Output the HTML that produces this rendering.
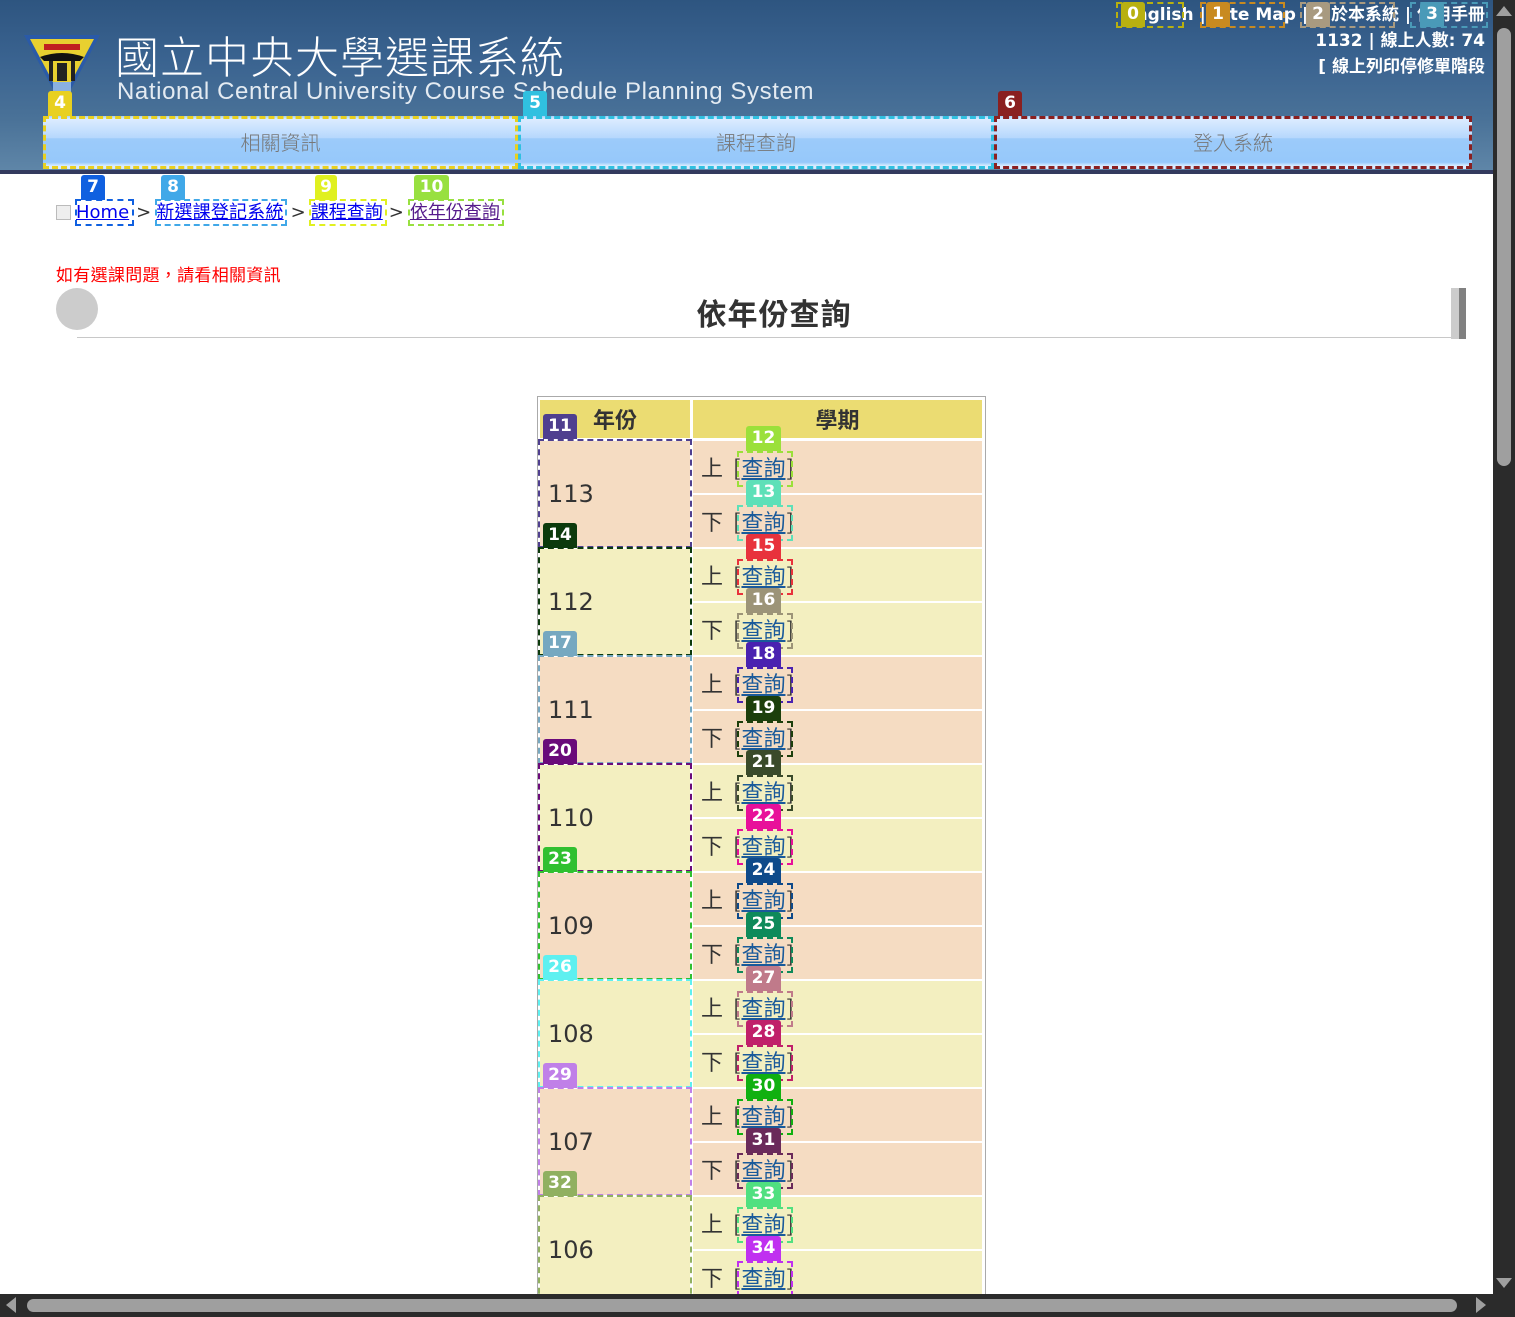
<!DOCTYPE html>
<html><head><meta charset="utf-8">
<style>
*{margin:0;padding:0;box-sizing:border-box}
body{width:1515px;height:1317px;overflow:hidden;position:relative;background:#fff;font-family:"DejaVu Sans","Liberation Sans","Noto Sans CJK TC",sans-serif;}
.a{position:absolute}
.hdr{left:0;top:0;width:1493px;height:171px;background:linear-gradient(180deg,#2e5580 0%,#3a6390 35%,#4a7298 70%,#5f86a8 100%)}
.band{left:0;top:170px;width:1493px;height:4px;background:#333a5e}
.btn{top:116px;height:53px;background:linear-gradient(180deg,#dcecff 0%,#b6d8fd 40%,#9ccbfa 42%,#96c8fa 92%,#dbeeff 100%);color:#777;font-size:20px;text-align:center;line-height:46px;font-family:"Noto Sans CJK TC",sans-serif;font-weight:300}
.lb{position:absolute;color:#fff;font-size:17px;font-weight:bold;text-align:center;border-radius:3px 3px 0 0;line-height:25px;height:25px}
.tw{color:#fff;font-size:17px;font-weight:bold;text-align:right;right:30px}
.bc a{color:#00e;text-decoration:underline}
.cell{position:absolute}
.yr{left:540px;width:150px;height:106px;font-size:24px;color:#333;padding-left:8px;display:flex;align-items:center}
.sm{left:693px;width:289px;height:52px;font-size:22px;color:#333;padding-left:8px;line-height:52px;font-family:"Noto Sans CJK TC",sans-serif}
.sm b{font-weight:normal;margin-left:10px}
.sm u{color:#1a5a9a;margin:0 1px}
.pe{background:#f5dcc2}.cr{background:#f3efc0}
.yb{position:absolute;left:538px;width:154px;height:109px;border:2px dashed}
.lk{position:absolute;left:737px;width:56px;height:36px;border:2px dashed}
.ll{left:746px;width:35px}
.yl{left:543px;width:34px}
</style></head><body>
<div class="a hdr"></div>
<div class="a band"></div>
<!-- logo -->
<svg class="a" style="left:22px;top:33px" width="80" height="75" viewBox="0 0 80 75"><polygon points="2,2 78,2 40,73" fill="#2a5aa8"/><polygon points="8,6 72,6 40,66" fill="#e8d030"/><rect x="22" y="11" width="36" height="6" fill="#c02020"/><path d="M18 24 Q40 16 62 24 L58 28 L22 28Z" fill="#111"/><rect x="27" y="28" width="4" height="20" fill="#222"/><rect x="49" y="28" width="4" height="20" fill="#222"/><rect x="35" y="30" width="10" height="18" fill="#222"/><rect x="31" y="49" width="18" height="10" fill="#8ab0e0"/></svg>
<div class="a" style="left:115px;top:26px;font-size:44px;color:#fff;font-family:'Noto Sans CJK TC',sans-serif;font-weight:300;letter-spacing:1px;line-height:56px">國立中央大學選課系統</div>
<div class="a" style="left:117px;top:77px;font-size:24px;color:#e4ebf2;font-family:'Liberation Sans',sans-serif;line-height:30px;letter-spacing:0.6px">National Central University Course Schedule Planning System</div>
<!-- top right -->
<div class="a tw" style="top:3px;line-height:24px">English | Site Map | 關於本系統 | 使用手冊</div>
<div class="a" style="left:1116px;top:2px;width:68px;height:26px;border:2px dashed #b8b010"></div>
<div class="lb" style="left:1121px;top:2px;width:24px;background:#b8b010">0</div>
<div class="a" style="left:1200px;top:2px;width:85px;height:26px;border:2px dashed #c88a20"></div>
<div class="lb" style="left:1206px;top:2px;width:24px;background:#c88a20">1</div>
<div class="a" style="left:1300px;top:2px;width:95px;height:26px;border:2px dashed #a89a80"></div>
<div class="lb" style="left:1306px;top:2px;width:24px;background:#a89a80">2</div>
<div class="a" style="left:1410px;top:2px;width:78px;height:26px;border:2px dashed #4a9ab8"></div>
<div class="lb" style="left:1420px;top:2px;width:24px;background:#4a9ab8">3</div>
<div class="a tw" style="top:30px;line-height:22px">1132 | 線上人數: 74</div>
<div class="a tw" style="top:56px;line-height:22px">[ 線上列印停修單階段</div>
<!-- nav -->
<div class="a btn" style="left:43px;width:475px;border:3px dashed #e8d020">相關資訊</div>
<div class="a btn" style="left:518px;width:476px;border:3px dashed #30c0e0">課程查詢</div>
<div class="a btn" style="left:994px;width:478px;border:3px dashed #8a2020">登入系統</div>
<div class="lb" style="left:48px;top:91px;width:24px;background:#e8d020">4</div>
<div class="lb" style="left:523px;top:91px;width:24px;background:#30c0e0">5</div>
<div class="lb" style="left:998px;top:91px;width:24px;background:#8a2020">6</div>
<!-- breadcrumb -->
<div class="a bc" style="left:56px;top:200px;font-size:18px;line-height:26px;color:#333;font-family:'DejaVu Sans','Noto Sans CJK TC',sans-serif;white-space:nowrap">
<span style="display:inline-block;width:15px;height:15px;border:1px solid #bbb;background:#eee;vertical-align:-2px;margin-right:5px"></span><a>Home</a><span style="margin:0 5px 0 7px">&gt;</span><a style="letter-spacing:0.2px">新選課登記系統</a><span style="margin:0 5px 0 7px">&gt;</span><a>課程查詢</a><span style="margin:0 6px">&gt;</span><a style="color:#551a8b">依年份查詢</a></div>
<div class="a" style="left:75px;top:199px;width:59px;height:27px;border:2px dashed #1060e0"></div>
<div class="a" style="left:155px;top:199px;width:132px;height:27px;border:2px dashed #40a8e8"></div>
<div class="a" style="left:309px;top:199px;width:78px;height:27px;border:2px dashed #e0f020"></div>
<div class="a" style="left:408px;top:199px;width:96px;height:27px;border:2px dashed #98e040"></div>
<div class="lb" style="left:81px;top:175px;width:24px;background:#1060e0">7</div>
<div class="lb" style="left:161px;top:175px;width:24px;background:#40a8e8">8</div>
<div class="lb" style="left:315px;top:175px;width:22px;background:#e0f020">9</div>
<div class="lb" style="left:414px;top:175px;width:35px;background:#98e040">10</div>
<div class="a" style="left:56px;top:263px;font-size:17px;color:#f00;font-family:'Noto Sans CJK TC',sans-serif;line-height:22px;letter-spacing:0.3px">如有選課問題，請看相關資訊</div>
<div class="a" style="left:56px;top:288px;width:42px;height:42px;border-radius:50%;background:#ccc"></div>
<div class="a" style="left:77px;top:337px;width:1374px;height:1px;background:#c8c8c8"></div>
<div class="a" style="left:1451px;top:288px;width:8px;height:51px;background:#ccc"></div>
<div class="a" style="left:1459px;top:288px;width:7px;height:51px;background:#808080"></div>
<div class="a" style="left:0;top:290px;width:1548px;text-align:center;font-size:30px;font-weight:bold;color:#333;font-family:'Noto Sans CJK TC',sans-serif;line-height:44px;letter-spacing:1px">依年份查詢</div>
<!-- table -->
<div class="a" style="left:537px;top:396px;width:449px;height:910px;border:1px solid #aaa"></div>
<div class="a" style="left:540px;top:400px;width:150px;height:38px;background:#ebdc72;text-align:center;font-size:22px;font-weight:bold;color:#333;line-height:38px;font-family:'Noto Sans CJK TC',sans-serif">年份</div>
<div class="a" style="left:693px;top:400px;width:289px;height:38px;background:#ebdc72;text-align:center;font-size:22px;font-weight:bold;color:#333;line-height:38px;font-family:'Noto Sans CJK TC',sans-serif">學期</div>

<div class="cell yr pe" style="top:441px">113</div>
<div class="cell yr cr" style="top:549px">112</div>
<div class="cell yr pe" style="top:657px">111</div>
<div class="cell yr cr" style="top:765px">110</div>
<div class="cell yr pe" style="top:873px">109</div>
<div class="cell yr cr" style="top:981px">108</div>
<div class="cell yr pe" style="top:1089px">107</div>
<div class="cell yr cr" style="top:1197px">106</div>

<div class="cell sm pe" style="top:441px">上<b>[<u>查詢</u>]</b></div>
<div class="cell sm pe" style="top:495px">下<b>[<u>查詢</u>]</b></div>
<div class="cell sm cr" style="top:549px">上<b>[<u>查詢</u>]</b></div>
<div class="cell sm cr" style="top:603px">下<b>[<u>查詢</u>]</b></div>
<div class="cell sm pe" style="top:657px">上<b>[<u>查詢</u>]</b></div>
<div class="cell sm pe" style="top:711px">下<b>[<u>查詢</u>]</b></div>
<div class="cell sm cr" style="top:765px">上<b>[<u>查詢</u>]</b></div>
<div class="cell sm cr" style="top:819px">下<b>[<u>查詢</u>]</b></div>
<div class="cell sm pe" style="top:873px">上<b>[<u>查詢</u>]</b></div>
<div class="cell sm pe" style="top:927px">下<b>[<u>查詢</u>]</b></div>
<div class="cell sm cr" style="top:981px">上<b>[<u>查詢</u>]</b></div>
<div class="cell sm cr" style="top:1035px">下<b>[<u>查詢</u>]</b></div>
<div class="cell sm pe" style="top:1089px">上<b>[<u>查詢</u>]</b></div>
<div class="cell sm pe" style="top:1143px">下<b>[<u>查詢</u>]</b></div>
<div class="cell sm cr" style="top:1197px">上<b>[<u>查詢</u>]</b></div>
<div class="cell sm cr" style="top:1251px">下<b>[<u>查詢</u>]</b></div>

<div class="yb" style="top:439px;border-color:#4f3f8f"></div>
<div class="yb" style="top:547px;border-color:#0c3a0c"></div>
<div class="yb" style="top:655px;border-color:#76a8c0"></div>
<div class="yb" style="top:763px;border-color:#6a0a7a"></div>
<div class="yb" style="top:871px;border-color:#30c030"></div>
<div class="yb" style="top:979px;border-color:#5ef0f0"></div>
<div class="yb" style="top:1087px;border-color:#c080e8"></div>
<div class="yb" style="top:1195px;border-color:#90b060"></div>

<div class="lb yl" style="top:414px;background:#4f3f8f">11</div>
<div class="lb yl" style="top:523px;background:#0c3a0c">14</div>
<div class="lb yl" style="top:631px;background:#76a8c0">17</div>
<div class="lb yl" style="top:739px;background:#6a0a7a">20</div>
<div class="lb yl" style="top:847px;background:#30c030">23</div>
<div class="lb yl" style="top:955px;background:#5ef0f0">26</div>
<div class="lb yl" style="top:1063px;background:#c080e8">29</div>
<div class="lb yl" style="top:1171px;background:#90b060">32</div>

<div class="lk" style="top:451px;border-color:#9be03a"></div>
<div class="lk" style="top:505px;border-color:#5ee0b8"></div>
<div class="lk" style="top:559px;border-color:#e8323c"></div>
<div class="lk" style="top:613px;border-color:#9c9478"></div>
<div class="lk" style="top:667px;border-color:#4a22b0"></div>
<div class="lk" style="top:721px;border-color:#1c3f0c"></div>
<div class="lk" style="top:775px;border-color:#3a4a2a"></div>
<div class="lk" style="top:829px;border-color:#e8109a"></div>
<div class="lk" style="top:883px;border-color:#0e4a8a"></div>
<div class="lk" style="top:937px;border-color:#0e8a5a"></div>
<div class="lk" style="top:991px;border-color:#c07a8a"></div>
<div class="lk" style="top:1045px;border-color:#c0206a"></div>
<div class="lk" style="top:1099px;border-color:#10b010"></div>
<div class="lk" style="top:1153px;border-color:#6a2a5a"></div>
<div class="lk" style="top:1207px;border-color:#50e080"></div>
<div class="lk" style="top:1261px;border-color:#c030f0"></div>

<div class="lb ll" style="top:426px;background:#9be03a">12</div>
<div class="lb ll" style="top:480px;background:#5ee0b8">13</div>
<div class="lb ll" style="top:534px;background:#e8323c">15</div>
<div class="lb ll" style="top:588px;background:#9c9478">16</div>
<div class="lb ll" style="top:642px;background:#4a22b0">18</div>
<div class="lb ll" style="top:696px;background:#1c3f0c">19</div>
<div class="lb ll" style="top:750px;background:#3a4a2a">21</div>
<div class="lb ll" style="top:804px;background:#e8109a">22</div>
<div class="lb ll" style="top:858px;background:#0e4a8a">24</div>
<div class="lb ll" style="top:912px;background:#0e8a5a">25</div>
<div class="lb ll" style="top:966px;background:#c07a8a">27</div>
<div class="lb ll" style="top:1020px;background:#c0206a">28</div>
<div class="lb ll" style="top:1074px;background:#10b010">30</div>
<div class="lb ll" style="top:1128px;background:#6a2a5a">31</div>
<div class="lb ll" style="top:1182px;background:#50e080">33</div>
<div class="lb ll" style="top:1236px;background:#c030f0">34</div>

<!-- scrollbars -->
<div class="a" style="left:1493px;top:0;width:22px;height:1317px;background:#2b2b2b"></div>
<div class="a" style="left:1497px;top:28px;width:14px;height:438px;background:#9f9f9f;border-radius:7px"></div>
<div class="a" style="left:1496px;top:6px;width:0;height:0;border-left:8px solid transparent;border-right:8px solid transparent;border-bottom:10px solid #9f9f9f"></div>
<div class="a" style="left:1496px;top:1278px;width:0;height:0;border-left:8px solid transparent;border-right:8px solid transparent;border-top:10px solid #9f9f9f"></div>
<div class="a" style="left:0;top:1294px;width:1515px;height:23px;background:#2b2b2b"></div>
<div class="a" style="left:27px;top:1299px;width:1430px;height:13px;background:#9f9f9f;border-radius:7px"></div>
<div class="a" style="left:6px;top:1297px;width:0;height:0;border-top:8px solid transparent;border-bottom:8px solid transparent;border-right:10px solid #9f9f9f"></div>
<div class="a" style="left:1476px;top:1297px;width:0;height:0;border-top:8px solid transparent;border-bottom:8px solid transparent;border-left:10px solid #9f9f9f"></div>
</body></html>
